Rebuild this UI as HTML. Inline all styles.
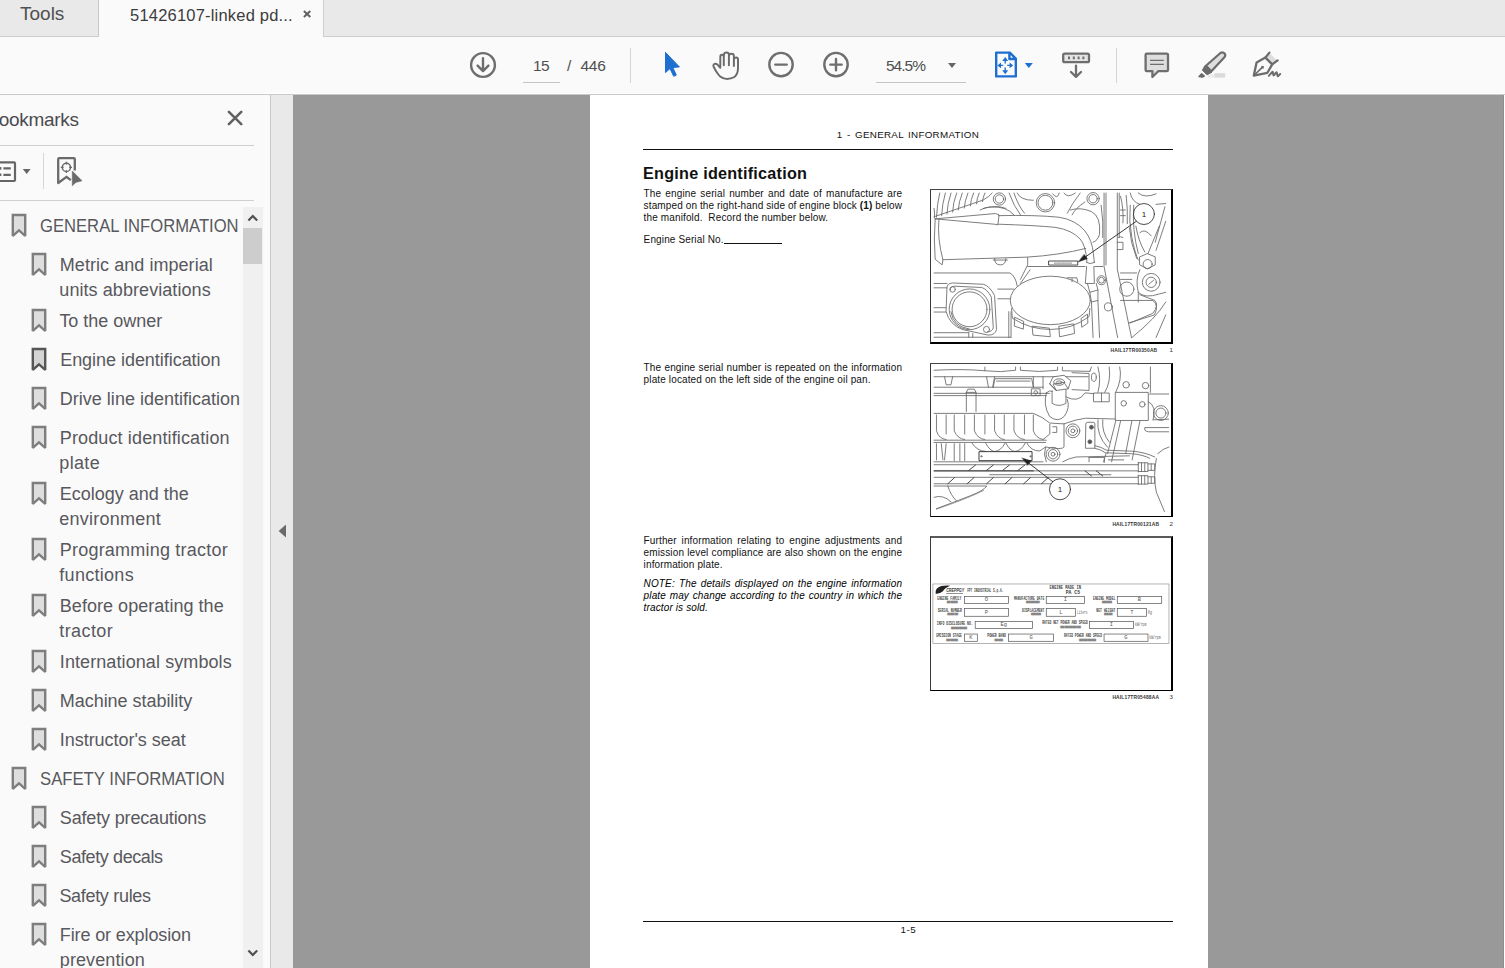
<!DOCTYPE html>
<html>
<head>
<meta charset="utf-8">
<title>51426107-linked pdf</title>
<style>
*{box-sizing:border-box;margin:0;padding:0}
html,body{width:1505px;height:968px;overflow:hidden;background:#999999;font-family:"Liberation Sans",sans-serif;}
.abs{position:absolute}
#tabbar{z-index:1;position:absolute;left:0;top:0;width:1505px;height:37px;background:#e9e9e9;border-bottom:1px solid #cdcdcd}
#tabtools{position:absolute;left:0;top:0;width:99px;height:36px;border-right:1px solid #c8c8c8;color:#505050;font-size:19px;line-height:36px}
#tabdoc{position:absolute;left:99px;top:0;width:225px;height:37px;background:#fafafa;border-right:1px solid #cfcfcf;color:#3c3c3c;font-size:16.5px}
#toolbar{position:absolute;left:0;top:36px;width:1505px;height:59px;z-index:0;background:#fafafa;border-bottom:1px solid #c9c9c9;box-shadow:inset 0 -1px 0 #ffffff}
#toolbar .t{position:absolute;color:#505050;font-size:15.5px;white-space:nowrap}
#panel{position:absolute;left:0;top:95px;width:271px;height:873px;background:#fafafa;border-right:1px solid #c8c8c8;overflow:hidden}
#strip{position:absolute;left:271px;top:95px;width:22px;height:873px;background:#e9e9e9}
#main{position:absolute;left:293px;top:95px;width:1212px;height:873px;background:#999999;overflow:hidden}
#page{position:absolute;left:297px;top:0;width:618px;height:873px;background:#ffffff}
.bm{position:absolute;white-space:nowrap;color:#58585d;font-size:18px;line-height:25px;height:25px;transform-origin:0 50%}
.bi{position:absolute;width:16px;height:24px}
.d{position:absolute;color:#111;font-size:10px;line-height:12px;white-space:nowrap;letter-spacing:0.13px}
.j{white-space:nowrap}
.fig{position:absolute;left:340px;width:243px;border-style:solid;border-color:#444 #000 #000 #3a3a3a;border-width:1px 2px 1px 1px;background:#fff;overflow:hidden}
.cap{position:absolute;color:#333;font-size:4.9px;line-height:6px;white-space:nowrap;font-weight:bold;letter-spacing:0.18px}
</style>
</head>
<body>
<!-- TAB BAR -->
<div id="tabbar">
  <div id="tabtools"><span class="abs" style="left:20px;top:-4px">Tools</span></div>
  <div id="tabdoc"><span class="abs" style="left:31px;top:5px;line-height:20px;white-space:nowrap;letter-spacing:0.2px">51426107-linked pd...</span>
    <svg class="abs" style="left:202px;top:9px" width="12" height="12" viewBox="0 0 12 12"><path d="M2.9 2 L9.3 8 M9.3 2 L2.9 8" stroke="#606060" stroke-width="2" fill="none"/></svg>
  </div>
</div>
<!-- TOOLBAR -->
<div id="toolbar">
  <!-- download circle -->
  <svg class="abs" style="left:468px;top:14px" width="30" height="30" viewBox="0 0 30 30"><circle cx="15" cy="15" r="11.9" fill="none" stroke="#6e6e6e" stroke-width="2.4"/><path d="M15 8.2 V21 M9.6 15.6 L15 21.2 L20.4 15.6" fill="none" stroke="#6e6e6e" stroke-width="2.4" stroke-linecap="round" stroke-linejoin="round"/></svg>
  <span class="t" style="left:533px;top:21px;line-height:18px;letter-spacing:-0.6px">15</span>
  <div class="abs" style="left:523px;top:46px;width:37px;height:1px;background:#c4c4c4"></div>
  <span class="t" style="left:567px;top:21px;line-height:18px">/</span>
  <span class="t" style="left:580.5px;top:21px;line-height:18px;letter-spacing:-0.3px">446</span>
  <div class="abs" style="left:630px;top:12px;width:1px;height:35px;background:#d4d4d4"></div>
  <!-- select arrow (blue) -->
  <svg class="abs" style="left:660px;top:12px" width="26" height="32" viewBox="0 0 26 32"><path d="M5.5 4.4 L5.5 24.6 L10 20.6 L13.7 28.3 L16.3 27.1 L12.8 19.5 L19.4 18.9 Z" fill="#1f6fd1" stroke="#1f6fd1" stroke-width="1" stroke-linejoin="round"/></svg>
  <!-- hand -->
  <svg class="abs" style="left:710px;top:12px" width="32" height="34" viewBox="0 0 32 34"><path d="M10.3 19.6 L10.3 8.9 Q10.3 6.8 12 6.8 Q13.8 6.8 13.8 8.9 L13.8 17.2 M13.9 8.4 L13.9 6.6 Q14.1 4.5 16.5 4.5 Q18.9 4.5 18.9 6.8 L18.9 17.2 M19 7.6 Q19.3 5.8 21.5 5.8 Q23.9 5.8 23.9 8.2 L23.9 18 M24 11.2 Q24.3 9.5 26.1 9.5 Q28 9.5 28 11.6 L28 20 Q28 26 24.4 29 Q21 31 16.4 30.9 Q11 30.5 7.8 25.8 Q5.4 22.4 3.6 18.8 Q2.8 17 4.2 16 Q5.9 15 7.5 16.7 L10.3 19.8" fill="none" stroke="#6b6b6b" stroke-width="1.95" stroke-linecap="round" stroke-linejoin="round"/></svg>
  <!-- zoom out -->
  <svg class="abs" style="left:766px;top:14px" width="30" height="30" viewBox="0 0 30 30"><circle cx="15" cy="14.6" r="11.7" fill="none" stroke="#6e6e6e" stroke-width="2.4"/><path d="M9.3 14.6 H20.7" stroke="#6e6e6e" stroke-width="2.4" stroke-linecap="round"/></svg>
  <!-- zoom in -->
  <svg class="abs" style="left:821px;top:14px" width="30" height="30" viewBox="0 0 30 30"><circle cx="15" cy="14.6" r="11.7" fill="none" stroke="#6e6e6e" stroke-width="2.4"/><path d="M9.3 14.6 H20.7 M15 8.9 V20.3" stroke="#6e6e6e" stroke-width="2.4" stroke-linecap="round"/></svg>
  <span class="t" style="left:886px;top:21px;line-height:18px;letter-spacing:-1px">54.5%</span>
  <div class="abs" style="left:876px;top:46px;width:90px;height:1px;background:#c4c4c4"></div>
  <svg class="abs" style="left:947px;top:26px" width="10" height="7" viewBox="0 0 10 7"><path d="M1 1 H9 L5 6 Z" fill="#666"/></svg>
  <!-- fit page (blue) -->
  <svg class="abs" style="left:992px;top:13px" width="28" height="30" viewBox="0 0 28 30"><path d="M4.2 3.6 H17.8 L23.8 9.6 V27.4 H4.2 Z M17.4 3.8 V10 H23.6" fill="none" stroke="#1f6fd1" stroke-width="2.4" stroke-linejoin="round"/><path d="M13.2 10.2 V14.4 M13.2 18.4 V23 M7 16.4 H11.2 M15.2 16.4 H19.4" stroke="#1f6fd1" stroke-width="1.4" fill="none"/><path d="M13.2 8 L16.2 12 H10.2 Z M13.2 25.2 L16.2 21.2 H10.2 Z M5.4 16.4 L9 13.6 V19.2 Z M21.2 16.4 L17.6 13.6 V19.2 Z" fill="#1f6fd1"/></svg>
  <svg class="abs" style="left:1024px;top:26px" width="10" height="7" viewBox="0 0 10 7"><path d="M0.8 1 H8.8 L4.8 6 Z" fill="#1f6fd1"/></svg>
  <!-- keyboard/scroll icon -->
  <svg class="abs" style="left:1060px;top:13px" width="32" height="30" viewBox="0 0 32 30"><rect x="3.2" y="4.6" width="25.8" height="8.6" rx="1.4" fill="#e4e4e4" stroke="#6e6e6e" stroke-width="2.3"/><path d="M8 8.9 h2 M12.8 8.9 h2 M17.6 8.9 h2 M22.4 8.9 h2" stroke="#6e6e6e" stroke-width="2.8"/><path d="M16 16.6 V27.4 M11 23 L16 27.8 L21 23" fill="none" stroke="#6e6e6e" stroke-width="2.3" stroke-linecap="round" stroke-linejoin="round"/></svg>
  <div class="abs" style="left:1116px;top:12px;width:1px;height:35px;background:#d4d4d4"></div>
  <!-- comment -->
  <svg class="abs" style="left:1142px;top:13px" width="30" height="32" viewBox="0 0 30 32"><path d="M4.8 4.6 H24.8 Q26 4.6 26 5.8 V21 Q26 22.2 24.8 22.2 H16.2 L10.4 28 V22.2 H4.8 Q3.6 22.2 3.6 21 V5.8 Q3.6 4.6 4.8 4.6 Z" fill="#dedede" stroke="#6e6e6e" stroke-width="2.3" stroke-linejoin="round"/><path d="M8 11.4 H21.8 M8 15.4 H21.8" stroke="#6e6e6e" stroke-width="1.3"/></svg>
  <!-- highlighter -->
  <svg class="abs" style="left:1196px;top:12px" width="32" height="32" viewBox="0 0 32 32"><rect x="18.3" y="25.2" width="10.9" height="4.4" fill="#dadada"/><rect x="12" y="26.4" width="6.4" height="3.2" fill="#ececec"/><path d="M10 17.8 L24.4 5 Q26.8 3.5 28.6 5.5 Q30 7.5 28.4 9.3 L15.4 23.2 Z" fill="#dedede" stroke="#6c6c6c" stroke-width="2.2" stroke-linejoin="round"/><path d="M9 17.4 L16 24.2 L11 26.8 L6.4 22.2 Z" fill="#6c6c6c" stroke="#6c6c6c" stroke-width="1" stroke-linejoin="round"/><path d="M5.6 25.6 L8.4 28 L6.6 29.2 L2.8 28.6 Z" fill="#6c6c6c" stroke="#6c6c6c" stroke-width="1.2" stroke-linejoin="round"/></svg>
  <!-- sign pen -->
  <svg class="abs" style="left:1250px;top:12px" width="34" height="32" viewBox="0 0 34 32"><path d="M19.8 5.4 L27 12.6 L22.6 16 L15.8 9.4 Z" fill="#dddddd"/><path d="M3.8 27.6 L6.6 14.6 L15.4 9.6 L22.2 16.4 L17.4 24.8 Z" fill="none" stroke="#6c6c6c" stroke-width="2.3" stroke-linejoin="round"/><path d="M15.4 9.6 L19.4 4.6 M22.2 16.4 L27.6 12.4" fill="none" stroke="#6c6c6c" stroke-width="2.3" stroke-linecap="round"/><path d="M4.2 27.2 L12.2 19.4" stroke="#6c6c6c" stroke-width="1.6"/><rect x="11.3" y="18" width="2.5" height="2.5" fill="#6c6c6c" transform="rotate(10 12.5 19.3)"/><path d="M18.8 27.8 L22.2 24 Q22.9 23.4 23 24.4 L23.3 27 Q23.5 27.8 24.1 27.1 L26 24.6 Q26.7 23.8 26.9 24.8 L27.5 27.8 Q27.8 28.6 28.4 27.9 L30.2 26" fill="none" stroke="#6c6c6c" stroke-width="1.9" stroke-linecap="round" stroke-linejoin="round"/></svg>
</div>
<!-- BOOKMARK PANEL -->
<div id="panel">
  
  <div class="abs" style="left:-13.5px;top:12px;font-size:19px;line-height:26px;color:#4b4b50;white-space:nowrap;letter-spacing:-0.32px">Bookmarks</div>
  <svg class="abs" style="left:226px;top:14px" width="18" height="18" viewBox="0 0 18 18"><path d="M2.9 2.9 L15.3 15.1 M15.3 2.9 L2.9 15.1" stroke="#626262" stroke-width="2.6" stroke-linecap="round" fill="none"/></svg>
  <div class="abs" style="left:0;top:50px;width:254px;height:1px;background:#cfcfcf"></div>
  <!-- options icon -->
  <svg class="abs" style="left:-8px;top:64px" width="26" height="26" viewBox="0 0 26 26"><rect x="1" y="3.4" width="22" height="18.6" rx="1" fill="none" stroke="#666" stroke-width="2.2"/><path d="M11.4 9.4 H18.8 M11.4 15.8 H18.8" stroke="#666" stroke-width="2.2"/><path d="M6 9.4 H9.4 M6 15.8 H9.4" stroke="#666" stroke-width="2.6"/></svg>
  <svg class="abs" style="left:21.8px;top:73px" width="10" height="7" viewBox="0 0 10 7"><path d="M0.8 0.9 H8.6 L4.7 5.9 Z" fill="#666"/></svg>
  <div class="abs" style="left:43px;top:58px;width:1px;height:36px;background:#d6d6d6"></div>
  <!-- find bookmark icon -->
  <svg class="abs" style="left:55px;top:60px" width="30" height="34" viewBox="0 0 30 34"><path d="M19.8 15.6 V4.2 Q19.8 3.2 18.8 3.2 H4.2 Q3.2 3.2 3.2 4.2 V28 L11.5 21.8 L15.8 25.2" fill="none" stroke="#6a6a6a" stroke-width="2.3" stroke-linejoin="round" stroke-linecap="butt"/><circle cx="11.4" cy="12.4" r="4.1" fill="none" stroke="#6a6a6a" stroke-width="1.5"/><path d="M11.4 6.8 V9.6 M11.4 15.2 V18 M5.8 12.4 H8.6 M14.2 12.4 H17" stroke="#6a6a6a" stroke-width="1.3"/><path d="M17.3 16.1 L17.3 30.8 L20.8 27.4 L27 25.8 Z" fill="#6a6a6a" stroke="#6a6a6a" stroke-width="0.6" stroke-linejoin="round"/></svg>
  <div class="abs" style="left:0;top:105px;width:254px;height:1px;background:#cfcfcf"></div>
  <!-- scrollbar -->
  <div class="abs" style="left:243px;top:112px;width:20px;height:761px;background:#f0f0f0"></div>
  <div class="abs" style="left:243px;top:133px;width:19px;height:36px;background:#cdcdcd"></div>
  <svg class="abs" style="left:246px;top:118px" width="14" height="10" viewBox="0 0 14 10"><path d="M2.4 7.6 L6.8 3 L11.2 7.6" fill="none" stroke="#505050" stroke-width="2.2"/></svg>
  <svg class="abs" style="left:246px;top:853px" width="14" height="10" viewBox="0 0 14 10"><path d="M2.4 2.4 L6.8 7 L11.2 2.4" fill="none" stroke="#505050" stroke-width="2.2"/></svg>
<div class="bm" style="left:39.8px;top:119.2px;transform:scaleX(0.9237)">GENERAL INFORMATION</div>
<svg class="bi" style="left:11.0px;top:118.1px" viewBox="0 0 16 24"><path d="M1.8 2 H14.2 V22.9 L8 17.4 L1.8 22.9 Z" fill="#dedede" stroke="#7e7e7e" stroke-width="2.4" stroke-linejoin="miter" stroke-miterlimit="2"/></svg>
<div class="bm" style="left:59.8px;top:158.2px;letter-spacing:0.05px">Metric and imperial</div>
<svg class="bi" style="left:31.2px;top:157.1px" viewBox="0 0 16 24"><path d="M1.8 2 H14.2 V22.9 L8 17.4 L1.8 22.9 Z" fill="#dedede" stroke="#7e7e7e" stroke-width="2.4" stroke-linejoin="miter" stroke-miterlimit="2"/></svg>
<div class="bm" style="left:59.3px;top:183.2px;letter-spacing:0.07px">units abbreviations</div>
<div class="bm" style="left:59.4px;top:214.2px;letter-spacing:-0.02px">To the owner</div>
<svg class="bi" style="left:31.2px;top:213.1px" viewBox="0 0 16 24"><path d="M1.8 2 H14.2 V22.9 L8 17.4 L1.8 22.9 Z" fill="#dedede" stroke="#7e7e7e" stroke-width="2.4" stroke-linejoin="miter" stroke-miterlimit="2"/></svg>
<div class="bm" style="left:60.2px;top:253.2px;letter-spacing:-0.04px">Engine identification</div>
<svg class="bi" style="left:31.2px;top:252.1px" viewBox="0 0 16 24"><path d="M1.8 2 H14.2 V22.9 L8 17.4 L1.8 22.9 Z" fill="#d4d4d4" stroke="#565656" stroke-width="2.4" stroke-linejoin="miter" stroke-miterlimit="2"/></svg>
<div class="bm" style="left:59.8px;top:292.2px;letter-spacing:0.01px">Drive line identification</div>
<svg class="bi" style="left:31.2px;top:291.1px" viewBox="0 0 16 24"><path d="M1.8 2 H14.2 V22.9 L8 17.4 L1.8 22.9 Z" fill="#dedede" stroke="#7e7e7e" stroke-width="2.4" stroke-linejoin="miter" stroke-miterlimit="2"/></svg>
<div class="bm" style="left:59.8px;top:331.2px;letter-spacing:0.13px">Product identification</div>
<svg class="bi" style="left:31.2px;top:330.1px" viewBox="0 0 16 24"><path d="M1.8 2 H14.2 V22.9 L8 17.4 L1.8 22.9 Z" fill="#dedede" stroke="#7e7e7e" stroke-width="2.4" stroke-linejoin="miter" stroke-miterlimit="2"/></svg>
<div class="bm" style="left:59.3px;top:356.2px;letter-spacing:0.34px">plate</div>
<div class="bm" style="left:59.8px;top:387.2px;letter-spacing:-0.01px">Ecology and the</div>
<svg class="bi" style="left:31.2px;top:386.1px" viewBox="0 0 16 24"><path d="M1.8 2 H14.2 V22.9 L8 17.4 L1.8 22.9 Z" fill="#dedede" stroke="#7e7e7e" stroke-width="2.4" stroke-linejoin="miter" stroke-miterlimit="2"/></svg>
<div class="bm" style="left:59.3px;top:412.2px;letter-spacing:0.23px">environment</div>
<div class="bm" style="left:59.8px;top:443.2px;letter-spacing:0.21px">Programming tractor</div>
<svg class="bi" style="left:31.2px;top:442.1px" viewBox="0 0 16 24"><path d="M1.8 2 H14.2 V22.9 L8 17.4 L1.8 22.9 Z" fill="#dedede" stroke="#7e7e7e" stroke-width="2.4" stroke-linejoin="miter" stroke-miterlimit="2"/></svg>
<div class="bm" style="left:59.3px;top:468.2px;letter-spacing:0.29px">functions</div>
<div class="bm" style="left:59.8px;top:499.2px;letter-spacing:0.04px">Before operating the</div>
<svg class="bi" style="left:31.2px;top:498.1px" viewBox="0 0 16 24"><path d="M1.8 2 H14.2 V22.9 L8 17.4 L1.8 22.9 Z" fill="#dedede" stroke="#7e7e7e" stroke-width="2.4" stroke-linejoin="miter" stroke-miterlimit="2"/></svg>
<div class="bm" style="left:59.3px;top:524.2px;letter-spacing:0.40px">tractor</div>
<div class="bm" style="left:59.8px;top:555.2px;letter-spacing:0.09px">International symbols</div>
<svg class="bi" style="left:31.2px;top:554.1px" viewBox="0 0 16 24"><path d="M1.8 2 H14.2 V22.9 L8 17.4 L1.8 22.9 Z" fill="#dedede" stroke="#7e7e7e" stroke-width="2.4" stroke-linejoin="miter" stroke-miterlimit="2"/></svg>
<div class="bm" style="left:59.8px;top:594.2px;letter-spacing:-0.04px">Machine stability</div>
<svg class="bi" style="left:31.2px;top:593.1px" viewBox="0 0 16 24"><path d="M1.8 2 H14.2 V22.9 L8 17.4 L1.8 22.9 Z" fill="#dedede" stroke="#7e7e7e" stroke-width="2.4" stroke-linejoin="miter" stroke-miterlimit="2"/></svg>
<div class="bm" style="left:59.8px;top:633.2px;letter-spacing:-0.04px">Instructor's seat</div>
<svg class="bi" style="left:31.2px;top:632.1px" viewBox="0 0 16 24"><path d="M1.8 2 H14.2 V22.9 L8 17.4 L1.8 22.9 Z" fill="#dedede" stroke="#7e7e7e" stroke-width="2.4" stroke-linejoin="miter" stroke-miterlimit="2"/></svg>
<div class="bm" style="left:39.8px;top:672.2px;transform:scaleX(0.9275)">SAFETY INFORMATION</div>
<svg class="bi" style="left:11.0px;top:671.1px" viewBox="0 0 16 24"><path d="M1.8 2 H14.2 V22.9 L8 17.4 L1.8 22.9 Z" fill="#dedede" stroke="#7e7e7e" stroke-width="2.4" stroke-linejoin="miter" stroke-miterlimit="2"/></svg>
<div class="bm" style="left:59.8px;top:711.2px;letter-spacing:-0.16px">Safety precautions</div>
<svg class="bi" style="left:31.2px;top:710.1px" viewBox="0 0 16 24"><path d="M1.8 2 H14.2 V22.9 L8 17.4 L1.8 22.9 Z" fill="#dedede" stroke="#7e7e7e" stroke-width="2.4" stroke-linejoin="miter" stroke-miterlimit="2"/></svg>
<div class="bm" style="left:59.8px;top:750.2px;letter-spacing:-0.40px">Safety decals</div>
<svg class="bi" style="left:31.2px;top:749.1px" viewBox="0 0 16 24"><path d="M1.8 2 H14.2 V22.9 L8 17.4 L1.8 22.9 Z" fill="#dedede" stroke="#7e7e7e" stroke-width="2.4" stroke-linejoin="miter" stroke-miterlimit="2"/></svg>
<div class="bm" style="left:59.4px;top:789.2px;letter-spacing:-0.31px">Safety rules</div>
<svg class="bi" style="left:31.2px;top:788.1px" viewBox="0 0 16 24"><path d="M1.8 2 H14.2 V22.9 L8 17.4 L1.8 22.9 Z" fill="#dedede" stroke="#7e7e7e" stroke-width="2.4" stroke-linejoin="miter" stroke-miterlimit="2"/></svg>
<div class="bm" style="left:59.8px;top:828.2px;letter-spacing:-0.12px">Fire or explosion</div>
<svg class="bi" style="left:31.2px;top:827.1px" viewBox="0 0 16 24"><path d="M1.8 2 H14.2 V22.9 L8 17.4 L1.8 22.9 Z" fill="#dedede" stroke="#7e7e7e" stroke-width="2.4" stroke-linejoin="miter" stroke-miterlimit="2"/></svg>
<div class="bm" style="left:59.8px;top:853.2px;letter-spacing:0.10px">prevention</div>
</div>
<div id="strip">
  <svg class="abs" style="left:6px;top:428px" width="10" height="16" viewBox="0 0 10 16"><path d="M9 1.4 L9 14.6 L1.6 8 Z" fill="#6a6a6a"/></svg>
</div>
<!-- MAIN -->
<div id="main">
  <div class="abs" style="left:1210px;top:0;width:1px;height:873px;background:#8e8e8e"></div><div class="abs" style="left:1211px;top:0;width:1px;height:873px;background:#fdfdfd"></div>
  <div id="page">
    <div class="d" style="left:0;width:636px;text-align:center;top:33.54px;font-size:9.8px;letter-spacing:0.3px;word-spacing:1.4px" id="hdr">1 - GENERAL INFORMATION</div>
    <div class="abs" style="left:53px;top:53.7px;width:529.6px;height:1.2px;background:#111"></div>
    <div class="abs" id="h1" style="left:53.0px;top:68.26px;font-size:16.2px;line-height:20px;font-weight:bold;color:#111;white-space:nowrap;letter-spacing:0.24px">Engine identification</div>
    <div class="d j" style="left:53.6px;top:92.90px;word-spacing:1.24px">The engine serial number and date of manufacture are</div>
    <div class="d j" style="left:53.6px;top:104.90px;word-spacing:-0.07px">stamped on the right-hand side of engine block <b>(1)</b> below</div>
    <div class="d" style="left:53.6px;top:116.90px;">the manifold.&nbsp; Record the number below.</div>
    <div class="d" style="left:53.6px;top:138.80px;">Engine Serial No.<span style="display:inline-block;width:58.8px;height:1px;background:#111;vertical-align:-1.6px"></span></div>
    <div class="d j" style="left:53.6px;top:266.50px;word-spacing:0.36px">The engine serial number is repeated on the information</div>
    <div class="d" style="left:53.6px;top:278.50px;">plate located on the left side of the engine oil pan.</div>
    <div class="d j" style="left:53.6px;top:439.90px;word-spacing:1.89px">Further information relating to engine adjustments and</div>
    <div class="d j" style="left:53.6px;top:451.90px;word-spacing:0.24px">emission level compliance are also shown on the engine</div>
    <div class="d" style="left:53.6px;top:463.90px;">information plate.</div>
    <div class="d j" style="left:53.6px;top:482.70px;font-style:italic;color:#000;word-spacing:1.24px">NOTE: The details displayed on the engine information</div>
    <div class="d j" style="left:53.6px;top:494.70px;font-style:italic;color:#000;word-spacing:0.83px">plate may change according to the country in which the</div>
    <div class="d" style="left:53.6px;top:506.70px;font-style:italic;color:#000">tractor is sold.</div>
    <div class="abs" style="left:53px;top:825.8px;width:529.6px;height:1.2px;background:#111"></div>
    <div class="d" style="left:310.6px;top:828.61px;font-size:9.8px;letter-spacing:0.5px">1-5</div>
    <div class="fig" id="fig1" style="top:94px;height:155px;border-bottom-width:2px"><svg class="abs" style="left:-1px;top:-1px" width="243" height="155" viewBox="0 0 1505 960" preserveAspectRatio="none" fill="none" stroke="#6a6a6a" stroke-width="5.4" stroke-linecap="round" stroke-linejoin="round">
<!-- hose ribs top-left -->
<path d="M60 25 Q45 90 40 175 M95 25 Q75 95 72 165 M130 25 Q108 90 105 155 M165 25 Q142 85 140 143 M200 25 Q178 80 175 130 M235 25 Q215 75 212 118 M270 25 Q252 65 250 105 M305 25 Q290 55 288 92 M340 25 Q328 50 325 78 M25 120 Q30 150 28 178"/>
<path d="M25 172 L330 68 Q370 45 385 25"/>
<!-- big pipe -->
<path d="M32 185 L405 152 L428 160 L420 222 L398 218 L32 185 M32 185 Q22 310 32 435 L75 470 L80 438 Q45 310 55 190"/>
<path d="M80 438 L600 422 Q800 410 965 368"/>
<path d="M426 165 Q650 160 800 175 Q900 190 960 260 Q1005 320 1012 400 L1018 455"/>
<path d="M422 218 Q650 225 780 238 Q880 255 930 310 Q965 350 972 450"/>
<path d="M310 130 Q340 110 380 112 Q470 105 520 160 M330 122 Q400 95 470 120"/>
<!-- top bolts -->
<circle cx="430" cy="62" r="38"/><circle cx="430" cy="62" r="26"/>
<circle cx="715" cy="85" r="57"/><circle cx="715" cy="85" r="46"/>
<circle cx="1010" cy="60" r="38"/><circle cx="1010" cy="60" r="26"/>
<path d="M490 25 Q520 110 560 160 M520 25 Q545 100 585 150 M540 25 Q560 70 640 70 M800 25 Q790 70 760 30 M830 25 Q850 60 900 25 M930 25 Q880 90 850 150 M960 80 Q900 120 880 160 M870 130 Q930 110 1000 140 Q1060 170 1050 280 Q1040 320 1010 330 M1060 100 Q1075 200 1070 300"/>
<!-- vertical rails -->
<path d="M1078 25 V480 L1162 920 M1090 25 V470 M1160 25 V495 L1248 920 M1172 25 V300"/>
<path d="M1180 45 Q1200 120 1195 210 M1215 40 Q1225 120 1222 215 M1180 130 h30 M1180 165 h30 M1160 330 h35 v45 h-35 M1165 300 Q1180 290 1195 300"/>
<!-- right bracket -->
<path d="M1240 25 Q1250 80 1300 95 M1290 25 Q1330 60 1400 30 M1400 95 L1460 90 M1455 110 L1395 330 M1420 230 L1350 400 M1240 100 Q1230 200 1250 300 Q1270 400 1290 440 M1275 230 Q1290 320 1330 390 M1300 270 Q1330 240 1370 290 M1460 200 L1400 380"/>
<path d="M1300 420 L1345 400 L1395 420 L1395 470 L1345 495 L1300 470 Z"/><circle cx="1348" cy="465" r="28"/>
<circle cx="1370" cy="578" r="55"/><circle cx="1370" cy="578" r="32"/><path d="M1355 590 L1385 565"/>
<circle cx="1219" cy="620" r="44"/><path d="M1262 100 Q1250 250 1290 400 M1235 240 Q1240 330 1280 430 M1240 830 L1380 770 Q1420 720 1392 690 L1300 655"/>
<path d="M1300 500 Q1270 560 1290 640 Q1330 680 1420 650 L1460 640 M1180 520 H1280 M1180 560 H1250 M1290 640 L1290 700 M1180 690 H1380 Q1420 720 1390 780 L1230 830 M1460 700 Q1400 800 1250 920 M1460 780 L1400 920"/>
<!-- mid lines -->
<path d="M25 520 H495 Q530 540 540 600 M25 585 H105 M25 612 H110 M25 735 H100 M25 762 H100 M25 890 H240 M240 890 V918 M265 895 V918 M25 918 H500 M488 760 V920 M502 760 V920 M420 620 H520 M420 680 H500"/>
<path d="M400 430 Q400 470 435 470 Q470 470 470 430 M392 440 L480 440"/>
<path d="M605 425 V470 L560 560 M605 480 H960 M620 500 L560 585 M1020 480 H1070"/>
<!-- oil filter -->
<ellipse cx="745" cy="690" rx="248" ry="150" fill="#fff"/>
<path d="M505 740 L510 800 Q620 870 745 870 Q880 870 985 790 L990 740"/>
<path d="M525 795 L580 820 L578 868 L525 850 Z M635 850 L740 862 L745 915 L640 905 Z M800 850 L890 835 L895 895 L805 915 Z M938 800 L975 775 L978 830 L942 855 Z"/>
<path d="M850 550 L910 550 L915 575 M880 555 V575"/>
<!-- dipstick tube -->
<path d="M968 455 Q990 470 1020 455 M970 480 L962 585 L1018 585 L1015 480 M975 585 L990 640 L1040 625 L1030 585 M990 640 L1000 700 L1040 690 L1040 625 M1000 700 L1010 920 M1040 690 L1050 920"/>
<circle cx="1062" cy="565" r="28"/><circle cx="1062" cy="565" r="18"/>
<circle cx="1105" cy="730" r="25"/>
<!-- flange -->
<path d="M105 610 Q105 585 140 582 L330 590 Q370 600 400 660 L412 870 Q405 905 360 905 L200 870 Q120 840 100 760 Z" fill="#fff"/>
<path d="M125 625 Q125 605 150 602 L320 610 Q355 620 380 670 L392 860 Q385 885 355 885" />
<circle cx="245" cy="745" r="126"/><circle cx="245" cy="745" r="108"/><path d="M130 760 Q140 850 245 868"/>
<circle cx="140" cy="622" r="17"/><circle cx="350" cy="870" r="19"/>
<!-- plate -->
<rect x="737" y="446" width="178" height="25" stroke="#222" stroke-width="5" fill="#fff"/><path d="M770 459 H880" stroke="#444" stroke-width="4" stroke-dasharray="3 5"/>
<!-- callout -->
<circle cx="1325" cy="155" r="65" stroke="#222" stroke-width="5" fill="#fff"/>
<path d="M1278 200 L935 440" stroke="#222" stroke-width="5.5"/>
<path d="M918 452 L975 432 L955 405 Z" fill="#222" stroke="#222" stroke-width="2"/>
<text x="1325" y="175" font-family="Liberation Sans, sans-serif" font-size="50" fill="#222" stroke="none" text-anchor="middle">1</text>
</svg>
</div>
    <div class="fig" id="fig2" style="top:268px;height:154px"><svg class="abs" style="left:-1px;top:-1px" width="243" height="155" viewBox="0 0 1505 960" preserveAspectRatio="none" fill="none" stroke="#6a6a6a" stroke-width="5.4" stroke-linecap="round" stroke-linejoin="round">
<!-- top structure -->
<path d="M25 45 Q200 35 340 48 M340 25 V48 Q440 60 530 45 V25 M560 25 V45 Q680 60 790 45 V25 M820 25 V48 L990 52 M25 85 H980 M25 150 H700 M25 188 H740 M25 202 H720"/>
<path d="M90 85 L100 135 H130 L140 85 M350 85 L362 150 M400 85 L388 150 M392 150 L402 97 H630 L640 150 M412 112 H620 M640 85 V150 M700 85 V160"/>
<path d="M225 182 L235 162 H275 L285 182 V300 M225 182 V300 M225 182 H285"/>
<rect x="630" y="160" width="52" height="42"/><circle cx="655" cy="182" r="11"/>
<path d="M880 60 L985 65 L985 170 L880 165 M990 52 L1000 25"/><ellipse cx="1015" cy="88" rx="15" ry="26"/>
<!-- hex fitting -->
<path d="M742 128 L762 86 L830 76 L872 110 L856 160 L782 170 Z M782 170 L742 128 M856 160 L830 120 L762 130 L782 170" fill="#fff"/>
<ellipse cx="800" cy="118" rx="34" ry="20"/><ellipse cx="800" cy="120" rx="18" ry="9"/>
<path d="M756 172 V250 Q798 275 842 250 V165 M722 182 Q698 255 740 330 Q790 372 832 330 Q870 275 850 225 M720 185 Q740 165 758 175 M842 210 Q920 250 960 185 L1015 190"/>
<!-- band -->
<path d="M25 312 H640 Q700 335 742 372 L830 377 Q900 350 962 342 L1340 352"/>
<path d="M40 322 V420 Q55 470 100 474 M100 322 V440 M150 322 V420 Q170 470 215 474 M215 322 V440 M275 322 V420 Q295 470 340 474 M340 322 V440 M400 322 V420 Q420 470 460 474 M460 322 V440 M520 322 V420 Q540 470 585 474 M585 322 V440 M640 322 V420 Q655 465 700 474 M742 380 V440 L700 474"/>
<path d="M25 478 H720 M25 492 H716"/>
<path d="M260 496 Q290 545 345 548 M345 496 Q370 545 400 548 Q440 545 465 496 M470 496 Q495 545 525 548 Q565 545 590 496 M600 496 Q625 545 680 545 L716 520"/>
<path d="M40 500 V600 M70 500 L80 600 M100 500 L90 600 M150 500 V605 M185 500 V605 M215 500 V605"/>
<path d="M25 612 H700 M25 630 H1290 M370 692 H1120 M25 708 H1290 M25 748 H1290"/>
<path d="M25 668 H640" stroke="#333" stroke-width="7"/>
<path d="M640 668 H1290"/>
<path d="M240 665 L282 632 M350 665 L392 632 M450 665 L492 632 M545 665 L587 632 M110 748 L152 710 M230 748 L272 710 M350 748 L392 710 M465 748 L507 710 M580 748 L622 710 M690 748 L732 710 M960 668 L1000 700 M1030 668 L1070 700" stroke="#444" stroke-width="6"/>
<!-- rod ends -->
<path d="M1290 615 V675 M1290 618 H1350 V672 H1290 M1350 625 H1392 V665 H1350 M1310 618 V672 M1330 618 V672 M1370 625 V665"/>
<path d="M1290 695 V752 M1290 698 H1350 V750 H1290 M1350 705 H1392 V745 H1350 M1310 698 V750 M1330 698 V750 M1370 705 V745"/>
<!-- bolts & bracket -->
<circle cx="885" cy="420" r="43"/><circle cx="885" cy="420" r="29"/><circle cx="885" cy="420" r="12"/>
<circle cx="762" cy="565" r="43"/><circle cx="762" cy="565" r="29"/><circle cx="762" cy="565" r="12"/>
<path d="M830 377 V520 Q822 540 716 520 Q700 565 720 612 M822 612 Q860 590 905 582 L1235 575 M760 395 H785 V430 H760"/>
<path d="M965 377 Q965 367 977 367 H1010 Q1021 367 1021 377 V528 H965 Z" fill="#fff"/>
<circle cx="1000" cy="398" r="12" fill="#555"/><circle cx="990" cy="488" r="12" fill="#555"/>
<!-- right block -->
<path d="M1150 182 H1352 V356 H1150 Z" fill="#fff"/><circle cx="1200" cy="250" r="17"/><circle cx="1315" cy="256" r="17"/>
<circle cx="1215" cy="135" r="20"/><circle cx="1335" cy="140" r="20"/>
<path d="M1015 186 H1110 V240 H1015 Z M1062 186 V240"/>
<circle cx="1430" cy="310" r="46"/><circle cx="1430" cy="310" r="31"/>
<path d="M1040 25 Q1062 100 1040 182 M1110 25 Q1122 120 1082 182 M1175 25 Q1192 100 1150 182 M1365 25 V182 M1360 192 H1478 M1352 240 Q1405 262 1382 352 M1382 352 L1478 348"/>
<path d="M1150 360 L1100 560 M1180 360 L1130 585 M1250 360 L1212 560 M1300 360 L1252 600 M1040 352 Q1030 450 1100 522 M1070 352 Q1062 430 1110 490 M1090 560 L1075 612 M1130 585 L1125 612 M985 585 H1080 V615 M985 585 V612 M1105 600 H1200"/>
<path d="M1021 512 Q1062 520 1092 540 L1250 546 Q1330 552 1392 582 M1021 528 Q1060 536 1086 556 L1250 562 Q1320 568 1360 590"/>
<path d="M1402 592 Q1380 700 1402 800 L1452 920 M1410 562 Q1442 530 1480 520 M1332 400 H1478 M1332 400 Q1320 420 1352 426 H1478"/>
<!-- bottom-left -->
<path d="M25 762 H352 Q330 792 250 822 Q150 862 40 902 M110 762 Q130 822 162 852 M25 832 Q80 812 130 860"/>
<path d="M330 790 Q230 840 40 905" stroke-dasharray="4 7"/>
<!-- plate -->
<rect x="306" y="549" width="326" height="56" stroke="#222" stroke-width="5.5" fill="#fff"/><circle cx="318" cy="578" r="4"/><circle cx="622" cy="578" r="4"/>
<!-- callout -->
<circle cx="805" cy="782" r="65" stroke="#222" stroke-width="5" fill="#fff"/>
<path d="M760 735 L590 603" stroke="#222" stroke-width="5.5"/>
<path d="M570 588 L628 606 L605 632 Z" fill="#222" stroke="#222" stroke-width="2"/>
<text x="805" y="800" font-family="Liberation Sans, sans-serif" font-size="50" fill="#222" stroke="none" text-anchor="middle">1</text>
</svg>
</div>
    <div class="fig" id="fig3" style="top:441px;height:155px;border-top:2px solid #5a5a5a"><svg class="abs" style="left:-1px;top:-1px" width="243" height="155" viewBox="0 0 1505 960" preserveAspectRatio="none" fill="none" stroke="#666" stroke-width="4.2" font-family="Liberation Mono, monospace">
<rect x="18" y="291" width="1462" height="370" stroke="#777" stroke-width="3.4"/>
<path d="M35 351 Q30 316 70 304 Q100 298 125 302 Q90 316 80 336 Q60 354 35 351 Z" fill="#222" stroke="none"/>
<text x="100" y="340" font-size="30" font-style="italic" font-weight="bold" fill="#333" stroke="none" textLength="112" lengthAdjust="spacingAndGlyphs" font-family="Liberation Sans, sans-serif">CREPPGY</text>
<path d="M100 350 H205" stroke="#555" stroke-width="4"/>
<text x="230" y="342" font-size="31" font-weight="bold" fill="#444" stroke="none" textLength="225" lengthAdjust="spacingAndGlyphs">FPT INDUSTRIAL S.p.A.</text>
<text x="740" y="325" font-size="34" font-weight="bold" fill="#444" stroke="none" textLength="195" lengthAdjust="spacingAndGlyphs">ENGINE MADE IN</text>
<text x="840" y="352" font-size="31" font-weight="bold" fill="#444" stroke="none" textLength="90" lengthAdjust="spacingAndGlyphs">PA  C5</text>
<rect x="213" y="368" width="274" height="43" stroke="#555" stroke-width="4.4" fill="#fff"/>
<text x="350.0" y="398.5" font-size="34" fill="#555" stroke="none" text-anchor="middle">O</text>
<rect x="720" y="368" width="237" height="43" stroke="#555" stroke-width="4.4" fill="#fff"/>
<text x="838.5" y="398.5" font-size="34" fill="#555" stroke="none" text-anchor="middle">I</text>
<rect x="1160" y="368" width="275" height="43" stroke="#555" stroke-width="4.4" fill="#fff"/>
<text x="1297.5" y="398.5" font-size="34" fill="#555" stroke="none" text-anchor="middle">B</text>
<text x="45" y="388" font-size="31" font-weight="bold" fill="#444" stroke="none" textLength="150" lengthAdjust="spacingAndGlyphs">ENGINE FAMILY</text>
<text x="104" y="409" font-size="24" font-weight="bold" fill="#6a6a6a" stroke="none" textLength="68" lengthAdjust="spacingAndGlyphs">&#9641;&#9641;&#9641;</text>
<text x="520" y="388" font-size="31" font-weight="bold" fill="#444" stroke="none" textLength="188" lengthAdjust="spacingAndGlyphs">MANUFACTURE DATE</text>
<text x="594" y="409" font-size="24" font-weight="bold" fill="#6a6a6a" stroke="none" textLength="85" lengthAdjust="spacingAndGlyphs">&#9641;&#9641;&#9641;</text>
<text x="1010" y="388" font-size="31" font-weight="bold" fill="#444" stroke="none" textLength="138" lengthAdjust="spacingAndGlyphs">ENGINE MODEL</text>
<text x="1065" y="409" font-size="24" font-weight="bold" fill="#6a6a6a" stroke="none" textLength="62" lengthAdjust="spacingAndGlyphs">&#9641;&#9641;</text>
<rect x="213" y="443" width="274" height="48" stroke="#555" stroke-width="4.4" fill="#fff"/>
<text x="350.0" y="476.0" font-size="34" fill="#555" stroke="none" text-anchor="middle">P</text>
<rect x="720" y="443" width="180" height="48" stroke="#555" stroke-width="4.4" fill="#fff"/>
<text x="810.0" y="476.0" font-size="34" fill="#555" stroke="none" text-anchor="middle">L</text>
<rect x="1160" y="443" width="180" height="48" stroke="#555" stroke-width="4.4" fill="#fff"/>
<text x="1250.0" y="476.0" font-size="34" fill="#555" stroke="none" text-anchor="middle">T</text>
<text x="48" y="464" font-size="31" font-weight="bold" fill="#444" stroke="none" textLength="149" lengthAdjust="spacingAndGlyphs">SERIAL NUMBER</text>
<text x="107" y="485" font-size="24" font-weight="bold" fill="#6a6a6a" stroke="none" textLength="67" lengthAdjust="spacingAndGlyphs">&#9641;&#9641;&#9641;</text>
<text x="570" y="464" font-size="31" font-weight="bold" fill="#444" stroke="none" textLength="138" lengthAdjust="spacingAndGlyphs">DISPLACEMENT</text>
<text x="625" y="485" font-size="24" font-weight="bold" fill="#6a6a6a" stroke="none" textLength="62" lengthAdjust="spacingAndGlyphs">&#9641;&#9641;</text>
<text x="1030" y="464" font-size="31" font-weight="bold" fill="#444" stroke="none" textLength="118" lengthAdjust="spacingAndGlyphs">NET WEIGHT</text>
<text x="1077" y="485" font-size="24" font-weight="bold" fill="#6a6a6a" stroke="none" textLength="53" lengthAdjust="spacingAndGlyphs">&#9641;&#9641;</text>
<text x="910" y="476" font-size="30" font-weight="normal" fill="#666" stroke="none" textLength="65" lengthAdjust="spacingAndGlyphs">Liters</text>
<text x="1350" y="476" font-size="30" font-weight="normal" fill="#666" stroke="none" textLength="25" lengthAdjust="spacingAndGlyphs">Kg</text>
<rect x="280" y="524" width="355" height="42" stroke="#555" stroke-width="4.4" fill="#fff"/>
<text x="457.5" y="554.0" font-size="34" fill="#555" stroke="none" text-anchor="middle">Eg</text>
<rect x="987" y="524" width="273" height="42" stroke="#555" stroke-width="4.4" fill="#fff"/>
<text x="1123.5" y="554.0" font-size="34" fill="#555" stroke="none" text-anchor="middle">I</text>
<text x="42" y="546" font-size="31" font-weight="bold" fill="#444" stroke="none" textLength="223" lengthAdjust="spacingAndGlyphs">INFO DISCLOSURE NO.</text>
<text x="130" y="567" font-size="24" font-weight="bold" fill="#6a6a6a" stroke="none" textLength="100" lengthAdjust="spacingAndGlyphs">&#9641;&#9641;&#9641;&#9641;</text>
<text x="695" y="542" font-size="31" font-weight="bold" fill="#444" stroke="none" textLength="283" lengthAdjust="spacingAndGlyphs">RATED NET POWER AND SPEED</text>
<text x="807" y="563" font-size="24" font-weight="bold" fill="#6a6a6a" stroke="none" textLength="127" lengthAdjust="spacingAndGlyphs">&#9641;&#9641;&#9641;&#9641;&#9641;</text>
<text x="1270" y="554" font-size="30" font-weight="normal" fill="#555" stroke="none" textLength="70" lengthAdjust="spacingAndGlyphs">kW/rpm</text>
<rect x="213" y="601" width="80" height="45" stroke="#555" stroke-width="4.4" fill="#fff"/>
<text x="253.0" y="632.5" font-size="34" fill="#555" stroke="none" text-anchor="middle">K</text>
<rect x="487" y="601" width="278" height="45" stroke="#555" stroke-width="4.4" fill="#fff"/>
<text x="626.0" y="632.5" font-size="34" fill="#555" stroke="none" text-anchor="middle">G</text>
<rect x="1078" y="601" width="272" height="45" stroke="#555" stroke-width="4.4" fill="#fff"/>
<text x="1214.0" y="632.5" font-size="34" fill="#555" stroke="none" text-anchor="middle">G</text>
<text x="38" y="622" font-size="31" font-weight="bold" fill="#444" stroke="none" textLength="159" lengthAdjust="spacingAndGlyphs">EMISSION STAGE</text>
<text x="101" y="643" font-size="24" font-weight="bold" fill="#6a6a6a" stroke="none" textLength="72" lengthAdjust="spacingAndGlyphs">&#9641;&#9641;&#9641;</text>
<text x="355" y="622" font-size="31" font-weight="bold" fill="#444" stroke="none" textLength="115" lengthAdjust="spacingAndGlyphs">POWER BAND</text>
<text x="400" y="643" font-size="24" font-weight="bold" fill="#6a6a6a" stroke="none" textLength="52" lengthAdjust="spacingAndGlyphs">&#9641;&#9641;</text>
<text x="830" y="622" font-size="31" font-weight="bold" fill="#444" stroke="none" textLength="235" lengthAdjust="spacingAndGlyphs">RATED POWER AND SPEED</text>
<text x="923" y="643" font-size="24" font-weight="bold" fill="#6a6a6a" stroke="none" textLength="106" lengthAdjust="spacingAndGlyphs">&#9641;&#9641;&#9641;&#9641;</text>
<text x="1358" y="632" font-size="30" font-weight="normal" fill="#555" stroke="none" textLength="70" lengthAdjust="spacingAndGlyphs">kW/rpm</text>
</svg></div>
    <div class="cap" style="left:520.6px;top:253.1px;width:46.3px">HAIL17TR00350AB</div>
    <div class="d" style="left:573px;width:10px;text-align:right;top:250.9px;font-size:6.2px;line-height:8px;letter-spacing:0;color:#333">1</div>
    <div class="cap" style="left:522.4px;top:427.3px;width:46.3px">HAIL17TR00121AB</div>
    <div class="d" style="left:573px;width:10px;text-align:right;top:425.2px;font-size:6.2px;line-height:8px;letter-spacing:0;color:#333">2</div>
    <div class="cap" style="left:522.4px;top:600.0px;width:46.3px">HAIL17TR05488AA</div>
    <div class="d" style="left:573px;width:10px;text-align:right;top:597.9px;font-size:6.2px;line-height:8px;letter-spacing:0;color:#333">3</div>
  </div>
</div>
</body>
</html>
